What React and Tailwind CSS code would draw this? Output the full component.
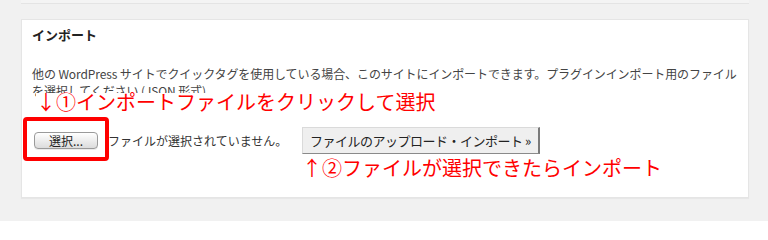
import React from "react";

const App = () => {
  return (
    <div
      className="w-[768px] h-[221px] bg-[#f1f1f1] overflow-hidden"
      style={{ fontFamily: '"Noto Sans CJK JP", "Noto Sans", sans-serif' }}
    >
      {/* bottom edge of the box above */}
      <div className="h-[4px] ml-[21px] mr-[19px] bg-[#f4f4f4] border-b border-[#e4e4e4]" />

      <div className="relative mt-[15px] ml-[21px] w-[728px] h-[179px] bg-white border border-[#e5e5e5] shadow-[0_1px_1px_rgba(0,0,0,0.04)] pl-[10px] pr-[4px] pt-[5px]">
        <h3 className="text-[13px] leading-[20px] font-bold text-[#222]">インポート</h3>

        <p className="mt-[20px] text-[12px] leading-[17px] text-[#444] whitespace-nowrap tracking-[-0.1px]">
          他の WordPress サイトでクイックタグを使用している場合、このサイトにインポートできます。プラグインインポート用のファイル
          <br />
          を選択してください (JSON 形式)。
        </p>

        <div className="mt-[28px] flex items-center h-[27px]">
          <button className="ml-[2px] w-[64px] h-[17px] rounded-[4px] border border-[#9a9a9a] bg-gradient-to-b from-white to-[#dcdcdc] text-[12px] leading-[15px] text-[#222] shadow-[0_1px_0_rgba(0,0,0,0.08)]">
            選択...
          </button>
          <span className="ml-[10px] text-[12px] text-[#333] w-[182px]">
            ファイルが選択されていません。
          </span>
          <button className="ml-[12px] h-[27px] px-[7px] bg-[#efefef] border border-[#dadada] border-r-[#7a7a7a] border-b-[#8a8a8a] border-r-2 text-[13px] tracking-[-0.5px] text-[#222]">
            ファイルのアップロード・インポート »
          </button>
        </div>

        {/* annotations */}
        <div className="absolute left-[14px] top-[73px] bg-white pr-[2px] text-[20px] leading-[18px] text-[#ff0000]">
          ↓①インポートファイルをクリックして選択
        </div>
        <div className="absolute left-px top-[97px] w-[86px] h-[44px] border-[4px] border-[#ff0000] rounded-[4px]" />
        <div className="absolute left-[280px] top-[137px] text-[20px] leading-[22px] text-[#ff0000]">
          ↑②ファイルが選択できたらインポート
        </div>
      </div>
    </div>
  );
};

export default App;
